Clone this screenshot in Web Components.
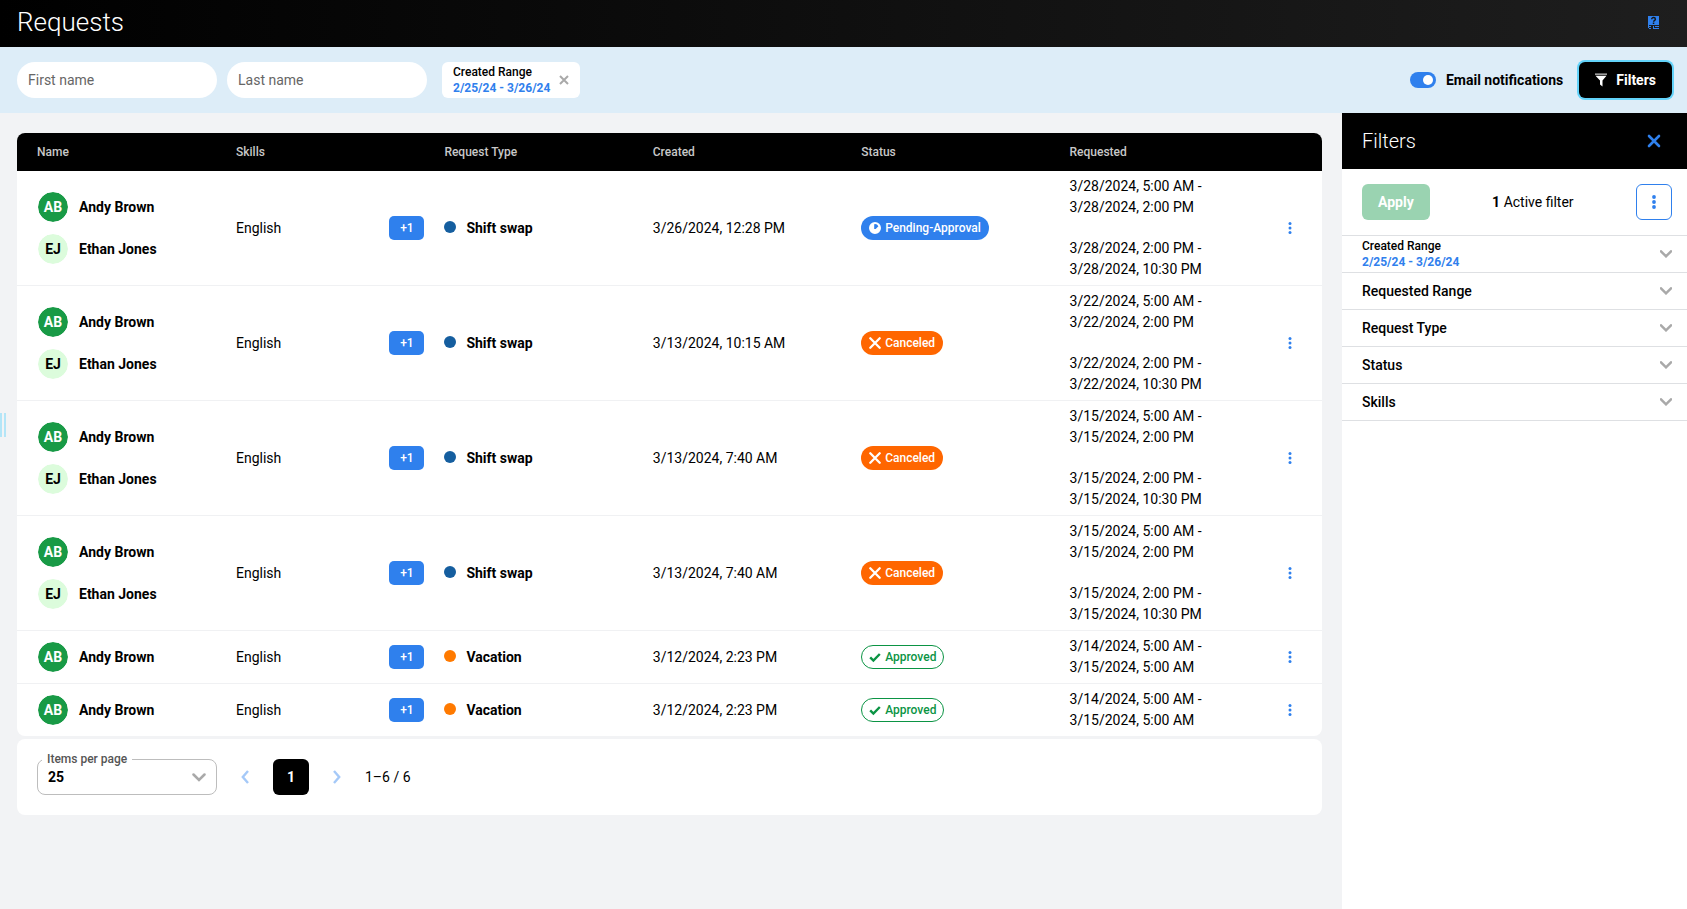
<!DOCTYPE html>
<html lang="en">
<head>
<meta charset="utf-8">
<meta name="viewport" content="width=device-width, initial-scale=1">
<title>Requests</title>
<style>
  html, body { margin: 0; height: 100%; }
  body {
    font: 400 14px/20px Roboto, "Liberation Sans", sans-serif;
    color: #000;
    background: #f2f3f5;
    --blue: #2f80ed;
    --green: #189a46;
    --line: #dee0e3;
    --grey: #a9a9a9;
  }
</style>
</head>
<body>
<requests-page></requests-page>

<script>
const define = (name, html, setup) => {
  const template = document.createElement('template');
  template.innerHTML = html;
  customElements.define(name, class extends HTMLElement {
    constructor() {
      super();
      this.attachShadow({ mode: 'open' }).append(template.content.cloneNode(true));
    }
    connectedCallback() { if (setup) setup(this, this.shadowRoot); }
  });
};

/* Icons: [viewBox width, viewBox height, markup] */
const ICONS = {
  close: [14, 14, '<path d="M2 2l10 10M12 2L2 12" fill="none" stroke="currentColor" stroke-width="2.6" stroke-linecap="round"/>'],
  clear: [10, 10, '<path d="M1 1l8 8M9 1L1 9" fill="none" stroke="currentColor" stroke-width="2"/>'],
  cross: [12, 12, '<path d="M1.3 1.3l9.4 9.4M10.7 1.3L1.3 10.7" fill="none" stroke="currentColor" stroke-width="2.3" stroke-linecap="round"/>'],
  check: [12, 12, '<path d="M1.2 6.400l3.200 3.200 6.400-6.600" fill="none" stroke="currentColor" stroke-width="2.4"/>'],
  clock: [12, 12, '<path fill-rule="evenodd" fill="currentColor" d="M6 0a6 6 0 1 1 0 12A6 6 0 0 1 6 0zM5.2 2.200v4.700h1.500l2.700-2.700A4 4 0 0 0 5.200 2.200z"/>'],
  down: [12, 8, '<path d="M1 1.300l5 5 5-5" fill="none" stroke="currentColor" stroke-width="2.5" stroke-linecap="round"/>'],
  downLarge: [14, 9, '<path d="M1.500 1.500L7 7l5.500-5.500" fill="none" stroke="currentColor" stroke-width="2.5" stroke-linecap="round"/>'],
  left: [8, 14, '<path d="M7 1L1.8 7 7 13" fill="none" stroke="currentColor" stroke-width="2.4"/>'],
  right: [8, 14, '<path d="M1 1l5.200 6L1 13" fill="none" stroke="currentColor" stroke-width="2.4"/>'],
  kebab: [4, 12, '<g fill="currentColor"><circle cx="2" cy="1.500" r="1.500"/><circle cx="2" cy="6" r="1.500"/><circle cx="2" cy="10.500" r="1.500"/></g>'],
  kebabLarge: [4, 14, '<g fill="currentColor"><circle cx="2" cy="2" r="1.900"/><circle cx="2" cy="7" r="1.900"/><circle cx="2" cy="12" r="1.900"/></g>'],
  funnel: [12, 14, '<path fill="#c4c4c4" d="M0 .5h12v1.300H0z"/><path fill="currentColor" d="M.5 2.700h11L7.500 7.500v6L5 11.500v-4z"/>'],
  help: [11, 14, '<path fill="currentColor" d="M0 1h11v9H0zM0 10h1v3H0zM1 11h2v1H1zM5 11h1v2H5zM7 11h4v1H7zM1 13h2v1H1zM5 13h6v1H5z"/><path d="M3.700 4.200c0-2.300 3.700-2.200 3.700 0 0 1.200-1.800 1.200-1.800 2.600" fill="none" stroke="#141414" stroke-width="1.400"/><path fill="#141414" d="M4.800 7.500h1.500V9H4.800z"/>']
};

define('app-icon', `
  <style>:host { display: inline-flex; flex: none; } svg { display: block; }</style>
`, (host, root) => {
  const [w, h, markup] = ICONS[host.getAttribute('name')];
  root.innerHTML += `<svg width="${w}" height="${h}" viewBox="0 0 ${w} ${h}" aria-hidden="true">${markup}</svg>`;
});

define('page-header', `
  <style>
    :host { display: flex; align-items: center; justify-content: space-between; height: 47px; box-sizing: border-box;
      padding: 0 28px 3px 17px; color: #fff; background: linear-gradient(90deg, #000, #1e1e1e); }
    h1 { margin: 0; font-size: 26px; line-height: 32px; font-weight: 300; }
    a { display: flex; color: var(--blue); }
  </style>
  <h1><slot></slot></h1>
  <a href="#help" aria-label="Help"><app-icon name="help"></app-icon></a>
`);

define('search-field', `
  <style>
    :host { display: block; width: 200px; }
    input { display: block; width: 100%; height: 36px; box-sizing: border-box; padding: 0 11px; border: 0; border-radius: 18px;
      background: #fff; font: inherit; color: inherit; }
    input::placeholder { color: #666; opacity: 1; }
  </style>
  <input type="text">
`, (host, root) => {
  const input = root.querySelector('input');
  input.placeholder = host.getAttribute('label');
  input.setAttribute('aria-label', host.getAttribute('label'));
});

define('range-label', `
  <style>
    :host { display: block; font-size: 12px; line-height: 16px; font-weight: 500; text-align: left; }
    span { display: block; }
    .value { color: var(--blue); font-weight: 700; }
  </style>
  <span>Created Range</span><span class="value">2/25/24 - 3/26/24</span>
`);

define('filter-chip', `
  <style>
    :host { display: flex; align-items: center; gap: 9px; height: 36px; box-sizing: border-box; padding: 0 11px; border-radius: 6px; background: #fff; }
    button { display: flex; padding: 0; border: 0; background: none; color: var(--grey); }
  </style>
  <slot></slot>
  <button type="button" aria-label="Remove filter"><app-icon name="clear"></app-icon></button>
`);

define('toggle-switch', `
  <style>
    :host { display: block; }
    label { display: flex; align-items: center; gap: 10px; font-weight: 700; }
    input { appearance: none; display: flex; justify-content: flex-end; align-items: center; width: 26px; height: 16px; box-sizing: border-box;
      margin: 0; padding: 3px; border-radius: 8px; background: #999; }
    input:not(:checked) { justify-content: flex-start; }
    input:checked { background: var(--blue); }
    input::before { content: ""; width: 10px; height: 10px; border-radius: 50%; background: #fff; }
  </style>
  <label><input type="checkbox" checked><slot></slot></label>
`);

define('filters-button', `
  <style>
    :host { display: block; }
    button { display: flex; align-items: center; gap: 9px; height: 36px; padding: 0 16px; border: 0; border-radius: 6px;
      background: #000; color: #fff; font: inherit; font-weight: 700; box-shadow: 0 0 0 2px #62d2f9; }
  </style>
  <button type="button"><app-icon name="funnel"></app-icon><slot></slot></button>
`);

define('filter-bar', `
  <style>
    :host { display: flex; align-items: center; gap: 10px; height: 66px; box-sizing: border-box; padding: 0 15px 0 17px; background: #ddedf8; }
    filter-chip { margin-left: 5px; }
    .end { display: flex; align-items: center; gap: 16px; margin-left: auto; }
  </style>
  <search-field label="First name"></search-field>
  <search-field label="Last name"></search-field>
  <filter-chip><range-label></range-label></filter-chip>
  <div class="end">
    <toggle-switch>Email notifications</toggle-switch>
    <filters-button>Filters</filters-button>
  </div>
`);

define('person-tag', `
  <style>
    :host { display: flex; align-items: center; gap: 10px; font-weight: 700; }
    .avatar { display: flex; align-items: center; justify-content: center; width: 32px; height: 32px; box-sizing: border-box; border-radius: 50%;
      border: 1px solid #fff; background: var(--green); background-clip: padding-box; color: #fff; }
    :host([light]) .avatar { background-color: #dcfcdc; color: #000; }
  </style>
  <span class="avatar"></span><slot></slot>
`, (host, root) => {
  root.querySelector('.avatar').textContent = host.getAttribute('initials');
});

define('status-pill', `
  <style>
    :host { display: inline-flex; align-items: center; gap: 4px; height: 24px; box-sizing: border-box; padding: 0 8px; border-radius: 12px;
      vertical-align: middle; font-size: 12px; line-height: 16px; font-weight: 500; white-space: nowrap; color: #fff; background: var(--blue); }
    :host([kind="Canceled"]) { background: #ff6600; }
    :host([kind="Approved"]) { background: #fff; color: #0b9444; border: 1px solid #0b9444; padding: 0 7px; }
  </style>
`, (host, root) => {
  const kind = host.getAttribute('kind');
  const icon = { 'Pending-Approval': 'clock', Canceled: 'cross', Approved: 'check' }[kind];
  root.innerHTML += `<app-icon name="${icon}"></app-icon><span>${kind}</span>`;
});

const swap = (created, status, day) => ({
  people: [['AB', 'Andy Brown'], ['EJ', 'Ethan Jones']], type: 'Shift swap', created, status,
  requested: [[`${day}, 5:00 AM -`, `${day}, 2:00 PM`], [`${day}, 2:00 PM -`, `${day}, 10:30 PM`]]
});
const vacation = () => ({
  people: [['AB', 'Andy Brown']], type: 'Vacation', created: '3/12/2024, 2:23 PM', status: 'Approved',
  requested: [['3/14/2024, 5:00 AM -', '3/15/2024, 5:00 AM']]
});
const REQUESTS = [
  swap('3/26/2024, 12:28 PM', 'Pending-Approval', '3/28/2024'),
  swap('3/13/2024, 10:15 AM', 'Canceled', '3/22/2024'),
  swap('3/13/2024, 7:40 AM', 'Canceled', '3/15/2024'),
  swap('3/13/2024, 7:40 AM', 'Canceled', '3/15/2024'),
  vacation(), vacation()
];

define('requests-table', `
  <style>
    :host { display: block; overflow: hidden; border-radius: 8px; background: #fff; }
    table { width: 100%; table-layout: fixed; border-collapse: separate; border-spacing: 0; }
    .name { width: 199px; } .menu { width: 64px; }
    th { height: 38px; padding: 0 0 0 20px; background: #000; color: #c8c8c8; font-size: 12px; line-height: 16px; font-weight: 500; text-align: left; }
    td { padding: 5px 0 5px 20px; border-bottom: 1px solid #f0f1f3; line-height: 21px; vertical-align: middle; }
    tr:last-child td { border-bottom: 0; }
    .people, .times, .skills, .type { display: flex; }
    .people { flex-direction: column; gap: 10px; }
    .times { flex-direction: column; gap: 20px; }
    .times span { display: block; white-space: nowrap; }
    .skills { align-items: center; justify-content: space-between; }
    .skills button { width: 35px; height: 24px; padding: 0; border: 0; border-radius: 5px; background: var(--blue); color: #fff; font: inherit; font-size: 12px; font-weight: 500; }
    .type { align-items: center; gap: 10px; font-weight: 700; }
    .dot { width: 12px; height: 12px; border-radius: 50%; background: #155e9f; margin-bottom: 2px; }
    .dot.Vacation { background: #ff7a00; }
    td:last-child { padding: 0; }
    td:last-child button { display: flex; margin: 0 auto; padding: 4px 8px; border: 0; background: none; color: var(--blue); }
  </style>
  <table>
    <colgroup><col class="name"><col><col><col><col><col><col class="menu"></colgroup>
    <thead><tr><th>Name</th><th>Skills</th><th>Request Type</th><th>Created</th><th>Status</th><th>Requested</th><th aria-label="Actions"></th></tr></thead>
    <tbody></tbody>
  </table>
`, (host, root) => {
  root.querySelector('tbody').innerHTML = REQUESTS.map(r => `
    <tr>
      <td><div class="people">${r.people.map(([i, n]) => `<person-tag initials="${i}"${i === 'EJ' ? ' light' : ''}>${n}</person-tag>`).join('')}</div></td>
      <td><div class="skills"><span>English</span><button type="button">+1</button></div></td>
      <td><div class="type"><span class="dot ${r.type.split(' ')[0]}"></span><span>${r.type}</span></div></td>
      <td>${r.created}</td>
      <td><status-pill kind="${r.status}"></status-pill></td>
      <td><div class="times">${r.requested.map(([a, b]) => `<div><span>${a}</span><span>${b}</span></div>`).join('')}</div></td>
      <td><button type="button" aria-label="Request actions"><app-icon name="kebab"></app-icon></button></td>
    </tr>`).join('');
});

define('table-pager', `
  <style>
    :host { display: flex; align-items: center; height: 76px; box-sizing: border-box; padding: 0 20px; border-radius: 8px; background: #fff; }
    .size { position: relative; display: flex; align-items: center; width: 180px; }
    select { appearance: none; width: 100%; height: 36px; box-sizing: border-box; padding: 0 10px; border: 1px solid #bdbdbd; border-radius: 8px;
      background: #fff; color: inherit; font: inherit; font-weight: 700; }
    label { position: absolute; left: 5px; top: -8px; padding: 0 5px; background: #fff; color: #555; font-size: 12px; line-height: 16px; font-weight: 500; }
    .size app-icon { position: absolute; right: 11px; color: var(--grey); }
    nav { display: flex; align-items: center; gap: 24px; padding: 0 24px; }
    nav button { display: flex; align-items: center; justify-content: center; padding: 0; border: 0; background: none; font: inherit; color: #a5c9f8; }
    nav .current { width: 36px; height: 36px; border-radius: 6px; background: #000; color: #fff; font-weight: 700; }
  </style>
  <div class="size">
    <select id="size"><option>25</option><option>50</option></select>
    <label for="size">Items per page</label>
    <app-icon name="downLarge"></app-icon>
  </div>
  <nav aria-label="Pages">
    <button type="button" aria-label="Previous page"><app-icon name="left"></app-icon></button>
    <button type="button" class="current">1</button>
    <button type="button" aria-label="Next page"><app-icon name="right"></app-icon></button>
  </nav>
  <span>1–6 / 6</span>
`);

define('panel-section', `
  <style>
    :host { display: block; border-bottom: 1px solid var(--line); }
    button { display: flex; align-items: center; justify-content: space-between; width: 100%; height: 36px; padding: 0 15px 0 20px;
      border: 0; background: none; color: inherit; font: inherit; font-weight: 500; }
    app-icon { color: var(--grey); }
  </style>
  <button type="button"><slot></slot><app-icon name="down"></app-icon></button>
`);

define('filters-panel', `
  <style>
    :host { display: block; background: #fff; }
    header { display: flex; align-items: center; justify-content: space-between; height: 56px; box-sizing: border-box; padding: 0 26px 0 20px; background: #000; color: #fff; }
    h2 { margin: 0; font-size: 20px; line-height: 24px; font-weight: 300; }
    button { display: flex; align-items: center; justify-content: center; padding: 0; border: 0; background: none; color: var(--blue); font: inherit; }
    .tools { display: flex; align-items: center; justify-content: space-between; height: 66px; padding: 0 15px 0 20px; border-bottom: 1px solid var(--line); }
    .tools button { height: 36px; border-radius: 6px; }
    .tools .apply { padding: 0 16px; background: #9ad3b1; color: #fff; font-weight: 700; }
    .tools .more { width: 36px; border: 1px solid var(--blue); }
  </style>
  <header><h2>Filters</h2><button type="button" aria-label="Close filters"><app-icon name="close"></app-icon></button></header>
  <div class="tools">
    <button type="button" class="apply">Apply</button>
    <span><b>1</b> Active filter</span>
    <button type="button" class="more" aria-label="More options"><app-icon name="kebabLarge"></app-icon></button>
  </div>
  <panel-section><range-label></range-label></panel-section>
  <panel-section>Requested Range</panel-section>
  <panel-section>Request Type</panel-section>
  <panel-section>Status</panel-section>
  <panel-section>Skills</panel-section>
`);

define('drawer-handle', `
  <style>
    :host { position: absolute; left: 0; top: 300px; display: flex; gap: 2px; width: 6px; height: 24px; }
    span { flex: 1; background: #b3e5f7; }
  </style>
  <span></span><span></span>
`);

define('requests-page', `
  <style>
    :host { display: flex; flex-direction: column; min-height: 100vh; }
    .body { position: relative; flex: 1; display: grid; grid-template-columns: minmax(0, 1fr) 345px; }
    main { display: flex; flex-direction: column; gap: 3px; padding: 20px 20px 20px 17px; }
  </style>
  <page-header>Requests</page-header>
  <filter-bar></filter-bar>
  <div class="body">
    <drawer-handle></drawer-handle>
    <main>
      <requests-table></requests-table>
      <table-pager></table-pager>
    </main>
    <filters-panel></filters-panel>
  </div>
`);
</script>
</body>
</html>
